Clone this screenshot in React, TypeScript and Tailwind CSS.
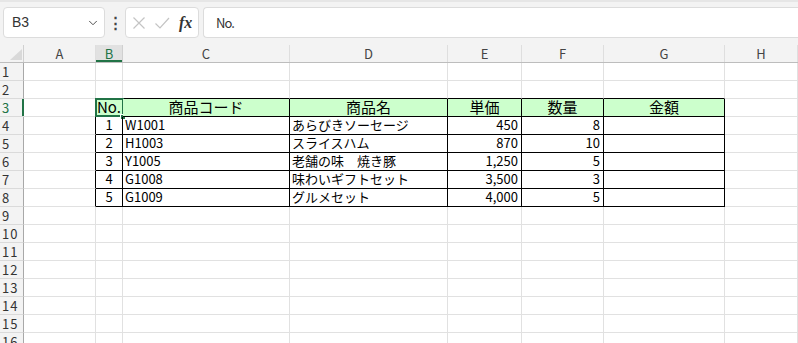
import { ChevronDown } from "lucide-react"

const cols = [
  { key: "A", w: "w-[72px]" },
  { key: "B", w: "w-[27px]" },
  { key: "C", w: "w-[167px]" },
  { key: "D", w: "w-[158px]" },
  { key: "E", w: "w-[74px]" },
  { key: "F", w: "w-[82px]" },
  { key: "G", w: "w-[121px]" },
  { key: "H", w: "flex-1" },
]

const header = ["No.", "商品コード", "商品名", "単価", "数量", "金額"]

const items = [
  ["1", "W1001", "あらびきソーセージ", "450", "8", ""],
  ["2", "H1003", "スライスハム", "870", "10", ""],
  ["3", "Y1005", "老舗の味　焼き豚", "1,250", "5", ""],
  ["4", "G1008", "味わいギフトセット", "3,500", "3", ""],
  ["5", "G1009", "グルメセット", "4,000", "5", ""],
]

const font = { fontFamily: '"Noto Sans CJK JP", "Noto Sans", sans-serif' }

function cellText(r: number, c: number): string {
  // table sits at B3:G8
  if (c < 1 || c > 6) return ""
  if (r === 3) return header[c - 1]
  if (r >= 4 && r <= 8) return items[r - 4][c - 1]
  return ""
}

function Cell({ r, c }: { r: number; c: number }) {
  const inTable = r >= 3 && r <= 8 && c >= 1 && c <= 6
  const blackRight = r >= 3 && r <= 8 && c >= 0 && c <= 6
  const blackBottom = r >= 2 && r <= 8 && c >= 1 && c <= 6
  const text = cellText(r, c)
  const isHead = r === 3 && inTable
  let align = "justify-start pl-[2px]"
  if (c === 1 || isHead) align = "justify-center"
  else if (c === 4 || c === 5) align = "justify-end pr-[3px]"

  return (
    <div
      className={`relative flex h-full items-end border-r border-b pb-[1px] text-black ${cols[c].w} ${
        blackRight ? "border-r-black" : "border-r-[#e1e1e1]"
      } ${blackBottom ? "border-b-black" : "border-b-[#e1e1e1]"} ${isHead ? "bg-[#ccffcc] text-[15px]" : "text-[13px]"} ${align}`}
    >
      <span className="whitespace-pre leading-[16px]">{text}</span>
      {r === 3 && c === 1 && (
        <>
          <div className="absolute -top-[1px] -left-[1px] -right-[2px] -bottom-[1px] border-2 border-[#217346]" />
          <div className="absolute -right-[4px] -bottom-[4px] h-[6px] w-[6px] border border-white bg-[#217346]" />
        </>
      )}
    </div>
  )
}

export default function App() {
  const rows = Array.from({ length: 16 }, (_, i) => i + 1)

  return (
    <div className="h-[343px] w-[798px] overflow-hidden bg-white" style={font}>
      {/* formula bar */}
      <div className="flex h-[45px] items-start gap-[0px] border-t-2 border-[#e6e6e6] bg-[#f3f3f3] pt-[5px] pl-[3px]">
        <div className="flex h-[31px] w-[102px] items-center justify-between rounded-[4px] border border-[#dcdcdc] bg-white pr-[4px] pl-[8px]">
          <span className="text-[14px] text-[#333]" style={{ fontFamily: '"Liberation Sans", "Noto Sans", sans-serif' }}>
            B3
          </span>
          <ChevronDown className="h-[14px] w-[14px] text-[#444]" strokeWidth={1.6} />
        </div>
        <div className="flex h-[31px] w-[20px] items-center justify-center text-[15px] font-bold text-[#444]">⋮</div>
        <div className="flex h-[31px] w-[74px] items-center gap-[7px] rounded-[4px] border border-[#dcdcdc] bg-white pl-[5px]">
          <svg width="16" height="16" viewBox="0 0 16 16" fill="none" stroke="#c4c4c4" strokeWidth="1.2">
            <path d="M2.5 2.5 L13.5 13.5 M13.5 2.5 L2.5 13.5" />
          </svg>
          <svg width="16" height="16" viewBox="0 0 16 16" fill="none" stroke="#c4c4c4" strokeWidth="1.2">
            <path d="M1.5 8.5 L6 13 L15 3" />
          </svg>
          <span
            className="ml-[2px] text-[16px] font-bold text-[#333] italic"
            style={{ fontFamily: '"Liberation Serif", "DejaVu Serif", serif' }}
          >
            fx
          </span>
        </div>
        <div className="ml-[4px] flex h-[31px] flex-1 items-center rounded-l-[4px] border border-r-0 border-[#dcdcdc] bg-white pl-[12px]">
          <span className="text-[13px] tracking-[-1px] text-[#333]">No.</span>
        </div>
      </div>

      {/* column headers */}
      <div className="flex h-[18px] border-b border-[#bdbdbd] bg-[#f3f3f3]">
        <div className="relative w-[24px] border-r border-[#d0d0d0]">
          <svg className="absolute right-[1px] bottom-[2px]" width="12" height="11" viewBox="0 0 12 11">
            <polygon points="12,0 12,11 0,11" fill="#d9d9d9" />
          </svg>
        </div>
        {cols.map((col) => (
          <div
            key={col.key}
            className={`flex items-center justify-center border-r text-[13px] leading-none ${col.w} ${
              col.key === "B"
                ? "border-r-[#d0d0d0] bg-[#e1e1e1] text-[#217346] shadow-[inset_0_-2px_0_#217346]"
                : "border-r-[#dedede] text-[#444]"
            }`}
          >
            {col.key}
          </div>
        ))}
      </div>

      {/* rows */}
      {rows.map((r) => (
        <div key={r} className="flex h-[18px]">
          <div
            className={`flex w-[24px] items-center border-b border-b-[#dadada] bg-[#f3f3f3] pl-[2px] text-[13px] leading-none tracking-[1px] ${
              r === 3
                ? "border-r-0 bg-[#e1e1e1] text-[#217346] shadow-[inset_-2px_0_0_#217346]"
                : "border-r border-r-[#a8a8a8] text-[#333]"
            }`}
          >
            {r}
          </div>
          {cols.map((col, c) => (
            <Cell key={col.key} r={r} c={c} />
          ))}
        </div>
      ))}
    </div>
  )
}
